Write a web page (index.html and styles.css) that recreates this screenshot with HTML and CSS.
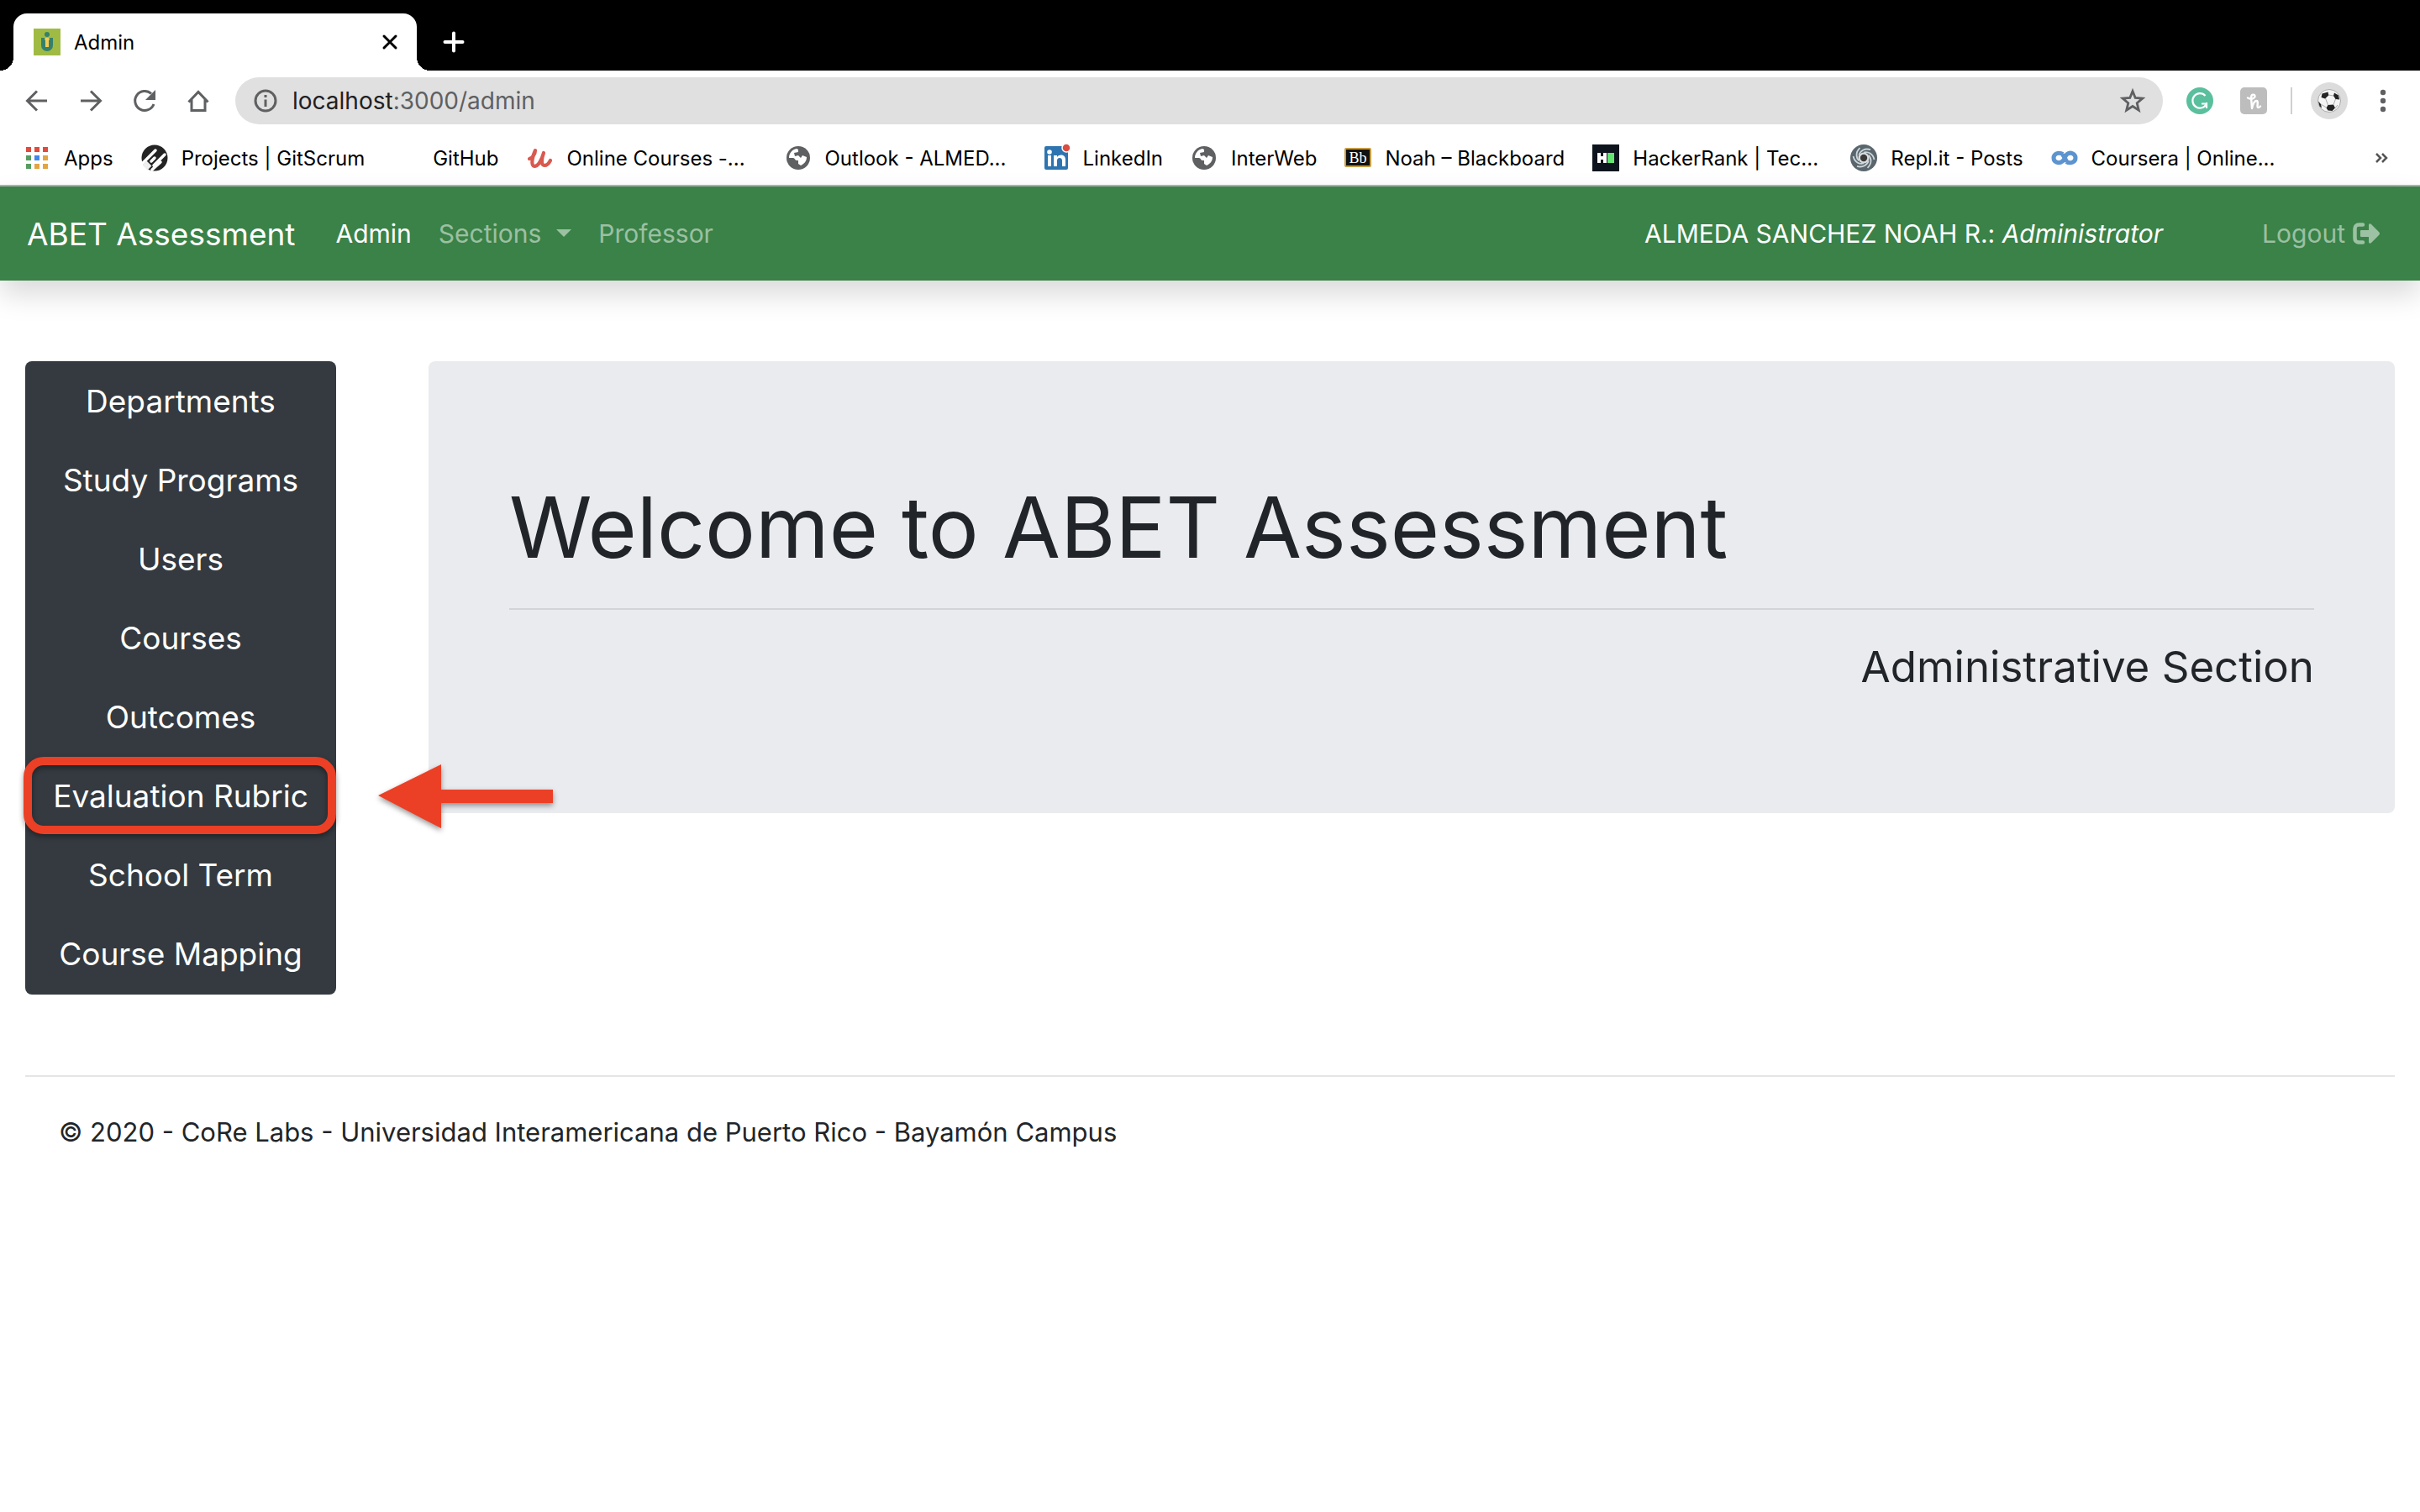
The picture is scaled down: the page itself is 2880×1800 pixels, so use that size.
FILE: index.html
```html
<!DOCTYPE html>
<html lang="en">
<head>
<meta charset="utf-8">
<title>Admin</title>
<link rel="stylesheet" href="styles.css">
</head>
<body>
<header class="browser">
  <div class="tabs">
    <div class="tab">
      <svg class="icon" viewBox="0 0 32 32" aria-hidden="true"><path fill="#a0bb43" d="M0 0h32v32H0z"/><circle cx="16" cy="7" r="3" fill="#35806c"/><path fill="#35806c" d="M9 11h14v9a7 7 0 0 1-14 0z"/><path fill="#f3cc55" d="M14 11h4v11h-4z"/><path fill="#a0bb43" d="M13 10h1v4h-1zM18 10h1v4h-1z"/></svg>
      <span class="tab-title">Admin</span>
      <button class="plain" aria-label="Close tab"><svg class="icon-sm" viewBox="0 0 24 24"><path d="M5 5l14 14M19 5L5 19" stroke="#000" stroke-width="3" stroke-linecap="round"/></svg></button>
    </div>
    <button class="plain new-tab" aria-label="New tab"><svg class="icon-sm" viewBox="0 0 24 24"><path d="M12 1.500v21M1.500 12h21" stroke="#fff" stroke-width="4" stroke-linecap="round"/></svg></button>
  </div>
  <div class="toolbar">
    <button class="plain" aria-label="Back"><svg class="icon" viewBox="0 0 32 32"><path d="M28 16H5M16 4.500L4.500 16 16 27.500" fill="none" stroke="#5f6062" stroke-width="3"/></svg></button>
    <button class="plain" aria-label="Forward"><svg class="icon" viewBox="0 0 32 32"><path d="M4 16h23M16 4.500L27.500 16 16 27.500" fill="none" stroke="#5f6062" stroke-width="3"/></svg></button>
    <button class="plain" aria-label="Reload"><svg class="icon" viewBox="0 0 32 32"><path d="M27 20A11.500 11.500 0 1 1 24 7.500" fill="none" stroke="#5f6062" stroke-width="3"/><path d="M29 3v12H17z" fill="#5f6062"/></svg></button>
    <button class="plain" aria-label="Home"><svg class="icon" viewBox="0 0 32 32"><path d="M4.500 17.500L16 5.500l11.500 12M8 14v13.500h16V14" fill="none" stroke="#5f6062" stroke-width="3"/></svg></button>
    <div class="omnibox">
      <svg class="icon" viewBox="0 0 32 32" aria-hidden="true"><circle cx="16" cy="16" r="12" fill="none" stroke="#5f6062" stroke-width="3"/><path d="M14.500 9h3v3h-3zM14.500 14.500h3V23h-3z" fill="#5f6062"/></svg>
      <span class="url"><span class="host">localhost</span>:3000/admin</span>
      <button class="plain" aria-label="Bookmark this page"><svg class="icon" viewBox="0 0 32 32"><path d="M16 4.500l3.200 8 8.600.600-6.600 5.600 2.100 8.400L16 22.500l-7.300 4.600 2.100-8.400-6.600-5.600 8.600-.600z" fill="none" stroke="#5f6062" stroke-width="2.800"/></svg></button>
    </div>
    <div class="extensions">
      <button class="plain" aria-label="Grammarly"><svg class="icon" viewBox="0 0 32 32"><circle cx="16" cy="16" r="16" fill="#5abf9d"/><path d="M22.500 10A8.700 8.700 0 1 0 24 19.500M18 19.500h6M24 18v7" fill="none" stroke="#fff" stroke-width="2.200"/></svg></button>
      <button class="plain" aria-label="Honey"><svg class="icon" viewBox="0 0 32 32"><rect width="32" height="32" rx="5" fill="#bdbdbd"/><path d="M9 12.500c4 2.500 9 .500 8.500-2.500-.500-2-4.500-2-4.500 2L14 25c1-4.500 3-9 5.500-9 3 0-.500 8 2 8 1 0 2-.500 2.500-1.500" fill="none" stroke="#fff" stroke-width="2.400" stroke-linecap="round" stroke-linejoin="round"/></svg></button>
    </div>
    <span class="divider"></span>
    <button class="plain avatar" aria-label="Profile"><svg class="icon" viewBox="0 0 32 32"><circle cx="16" cy="16" r="13.500" fill="#f5f5f5" stroke="#aaa"/><path d="M7.500 7.500l7-2 .800 4-4.300 4-4.500-1.500zM22 6.500l5 3 1 5-4.500-.500-2.500-4zM14.500 21l6.500-.500 2 4-3.500 3.500-5-.500-2-3zM3 16.500l3 3.500 1 4.500-2.500-2z" fill="#242424"/><path d="M15 9l6 1M11.500 13l3 8M21 20.500l2.500-6.500M6 20l6.500 4M23 25l3-4" fill="none" stroke="#aaa"/></svg></button>
    <button class="plain menu" aria-label="Menu"><svg class="icon" viewBox="0 0 32 32"><g fill="#5f6062"><circle cx="16" cy="6" r="3.200"/><circle cx="16" cy="16" r="3.200"/><circle cx="16" cy="26" r="3.200"/></g></svg></button>
  </div>
  <nav class="bookmarks" aria-label="Bookmarks">
    <a href="#"><svg class="icon" viewBox="0 0 32 32"><g fill="#df4b3d"><path d="M3 3h6v6H3zM13 3h6v6h-6zM23 3h6v6h-6z"/></g><path fill="#579c61" d="M3 13h6v6H3zM3 23h6v6H3z"/><path fill="#4285ee" d="M13 13h6v6h-6z"/><path fill="#e2a541" d="M23 13h6v6h-6zM13 23h6v6h-6zM23 23h6v6h-6z"/></svg><span>Apps</span></a>
    <a href="#"><svg class="icon" viewBox="0 0 32 32"><circle cx="16" cy="16" r="15.500" fill="#242424"/><path d="M2 22L17 7M12 20l4-4M15 25L28 12M13 30l10-9" stroke="#fff" stroke-width="3.500" stroke-linecap="round"/><path d="M4 22l6 6" stroke="#eee" stroke-width="7"/></svg><span>Projects | GitScrum</span></a>
    <a href="#"><svg class="icon" viewBox="0 0 32 32"></svg><span>GitHub</span></a>
    <a href="#"><svg class="icon" viewBox="0 0 32 32"><path d="M3 17c4-1 7-6 7-10-3 6-6 18-1 19 5 0 9-9 11-16-3 8-3 15 1 15 3 0 5-2 7-6" fill="none" stroke="#d9594f" stroke-width="4.200" stroke-linecap="round" stroke-linejoin="round"/></svg><span class="cut">Online Courses -...</span></a>
    <a href="#"><svg class="icon" viewBox="0 0 32 32"><circle cx="16" cy="16" r="14" fill="#5f6062"/><path d="M14 5c-5 1-9 5-9 11h5c2 0 2 3 4 3h2v4l3 2c4-2 7-5 7-10l-5-2-2 3-3-3-4 1-1-4 5-1V6z" fill="#fff"/></svg><span class="cut">Outlook - ALMED...</span></a>
    <a href="#"><svg class="icon" viewBox="0 0 32 32"><rect x="2" y="2" width="28" height="28" rx="2" fill="#2e74b0"/><circle cx="8" cy="9" r="2.800" fill="#fff"/><path d="M6 13h4v13H6zM13 13h4v2c3-4 10-3 10 3v8h-4v-7c0-4-6-4-6 0v7h-4z" fill="#fff"/><circle cx="28" cy="4" r="5" fill="#dc4c40" stroke="#fff" stroke-width="1.500"/></svg><span>LinkedIn</span></a>
    <a href="#"><svg class="icon" viewBox="0 0 32 32"><circle cx="16" cy="16" r="14" fill="#5f6062"/><path d="M14 5c-5 1-9 5-9 11h5c2 0 2 3 4 3h2v4l3 2c4-2 7-5 7-10l-5-2-2 3-3-3-4 1-1-4 5-1V6z" fill="#fff"/></svg><span>InterWeb</span></a>
    <a href="#"><svg class="icon" viewBox="0 0 32 32"><rect x="1" y="5" width="30" height="21" rx="1" fill="#111" stroke="#c69c42" stroke-width="2"/><text x="16" y="22" text-anchor="middle" class="bb">Bb</text></svg><span>Noah – Blackboard</span></a>
    <a href="#"><svg class="icon" viewBox="0 0 32 32"><path fill="#0e141e" d="M0 0h32v32H0z"/><path d="M6 10h4v4h3v-4h4v12h-4v-4h-3v4H6z" fill="#fff"/><path fill="#64e572" d="M18 10h8v12h-8z"/></svg><span class="cut">HackerRank | Tec...</span></a>
    <a href="#"><svg class="icon" viewBox="0 0 32 32"><circle cx="16" cy="16" r="16" fill="#59666e"/><circle cx="16" cy="16" r="6.500" fill="#d8dee0"/><g fill="none" stroke="#cdd5d8" stroke-width="1.800"><path id="arm" d="M16 9.500C21 8 27 11 28.500 18"/><use href="#arm" transform="rotate(60 16 16)"/><use href="#arm" transform="rotate(120 16 16)"/><use href="#arm" transform="rotate(180 16 16)"/><use href="#arm" transform="rotate(240 16 16)"/><use href="#arm" transform="rotate(300 16 16)"/></g><circle cx="16" cy="16" r="4.200" fill="#3d3a3a"/></svg><span>Repl.it - Posts</span></a>
    <a href="#"><svg class="icon" viewBox="0 0 32 32"><path d="M14 11.500C9 8.500 3 11 3 16s6 7.500 10.500 4c3-2.500 2.500-6 5.500-8.500 4-3 10-.500 10 4.500s-6 7.500-11 4.500M13.500 12c2 2 3 5 5 8" fill="none" stroke="#5d94cf" stroke-width="5"/></svg><span>Coursera | Online...</span></a>
    <button class="plain more" aria-label="More bookmarks"><svg class="icon-sm" viewBox="0 0 24 24"><path d="M6 7l5 5-5 5M13 7l5 5-5 5" fill="none" stroke="#555" stroke-width="2.500"/></svg></button>
  </nav>
</header>
<nav class="navbar" aria-label="Main">
  <a class="brand" href="#">ABET Assessment</a>
  <a class="active" href="#">Admin</a>
  <a href="#">Sections<span class="caret"></span></a>
  <a href="#">Professor</a>
  <span class="user">ALMEDA SANCHEZ NOAH R.: <em>Administrator</em></span>
  <a class="logout" href="#">Logout <svg class="icon" viewBox="0 0 32 32" aria-hidden="true"><path d="M12 5.500H7A4.500 4.500 0 0 0 2.500 10v12A4.500 4.500 0 0 0 7 26.500h5" fill="none" stroke="currentColor" stroke-width="4.500" stroke-linecap="round"/><path d="M10 12h9V6c0-2 2-2 3-1l9 9q2 2 0 4l-9 9c-1 1-3 1-3-1v-6h-9q-1 0-1-1v-6q0-1 1-1z" fill="currentColor"/></svg></a>
</nav>
<main class="content">
  <nav class="sidebar" aria-label="Administration">
    <a href="#">Departments</a>
    <a href="#">Study Programs</a>
    <a href="#">Users</a>
    <a href="#">Courses</a>
    <a href="#">Outcomes</a>
    <a class="marked" href="#">Evaluation Rubric<svg class="arrow" viewBox="0 0 208 76" aria-hidden="true"><path d="M0 37L75 0v30h133v16H75v30z" fill="#eb4026"/></svg></a>
    <a href="#">School Term</a>
    <a href="#">Course Mapping</a>
  </nav>
  <section class="hero">
    <h1>Welcome to ABET Assessment</h1>
    <hr>
    <p>Administrative Section</p>
  </section>
</main>
<footer class="footer">© 2020 - CoRe Labs - Universidad Interamericana de Puerto Rico - Bayamón Campus</footer>
</body>
</html>
```
FILE: styles.css
```css
* { box-sizing: border-box; }
body {
  margin: 0;
  background: #fff;
  color: #212529;
  font-family: Inter, "Liberation Sans", sans-serif;
  font-size: 30px;
}
a { color: inherit; text-decoration: none; }
svg { display: block; overflow: visible; flex: none; }
.plain { display: block; padding: 0; border: 0; background: none; flex: none; }
.icon { width: 32px; height: 32px; }
.icon-sm { width: 24px; height: 24px; }

.browser { border-bottom: 2px solid #b2b2b2; color: #000; font-size: 24px; }
.tabs { display: flex; align-items: flex-end; height: 84px; padding-left: 16px; background: #000; }
.tab {
  position: relative;
  display: flex;
  align-items: center;
  gap: 16px;
  width: 480px;
  height: 68px;
  padding: 0 20px 0 24px;
  border-radius: 16px 16px 0 0;
  background: #fff;
}
.tab::before, .tab::after {
  content: "";
  position: absolute;
  bottom: 0;
  width: 16px;
  height: 16px;
}
.tab::before { right: 100%; background: radial-gradient(circle at 0 0, transparent 16px, #fff 16px); }
.tab::after { left: 100%; background: radial-gradient(circle at 100% 0, transparent 16px, #fff 16px); }
.tab-title { flex: 1; }
.new-tab { margin: 0 0 22px 32px; }

.toolbar { display: flex; align-items: center; height: 72px; padding: 0 28px; gap: 32px; }
.omnibox {
  display: flex;
  align-items: center;
  flex: 1;
  height: 56px;
  margin: 0 -4px;
  padding: 0 20px;
  gap: 16px;
  border-radius: 28px;
  background: #e0e0e0;
}
.url { flex: 1; color: #5f6062; font-size: 28px; }
.host { color: #202124; }
.extensions { display: flex; gap: 32px; }
.divider { width: 2px; height: 32px; margin-left: -4px; background: #d0d0d0; }
.avatar { margin: 0 -10px; padding: 6px; border-radius: 50%; background: #dcdcdc; }
.menu { margin-left: 4px; }

.bookmarks { display: flex; align-items: center; gap: 33px; height: 64px; padding: 0 34px 0 28px; }
.bookmarks a { display: flex; align-items: center; gap: 16px; white-space: nowrap; }
.cut { min-width: 226px; }
.more { margin-left: auto; }
.bb { fill: #fff; font-family: "Liberation Serif", serif; font-size: 18px; }

.navbar {
  position: relative;
  display: flex;
  align-items: center;
  gap: 32px;
  height: 112px;
  padding: 0 48px 0 32px;
  background: #3a8247;
  box-shadow: 0 16px 32px rgba(0, 0, 0, .15);
  color: rgba(255, 255, 255, .5);
}
.brand { margin-right: 16px; color: #fff; font-size: 37px; }
.active, .user { color: #fff; }
.caret {
  display: inline-block;
  margin-left: 18px;
  border: 9px solid transparent;
  border-top-color: currentColor;
  border-bottom: 0;
  vertical-align: 7px;
}
.user { margin-left: auto; }
.logout { display: flex; align-items: center; gap: 9px; margin-left: 86px; }

.content {
  display: grid;
  grid-template-columns: 370px 1fr;
  align-items: start;
  gap: 110px;
  padding: 96px 30px;
}
.sidebar { padding: 1px 0; border-radius: 8px; background: #343a40; color: #fff; font-size: 37px; }
.sidebar a {
  position: relative;
  display: block;
  padding: 17px 0;
  line-height: 60px;
  text-align: center;
}
.marked::before {
  content: "";
  position: absolute;
  inset: 0 0 2px -2px;
  border: 10px solid #eb4026;
  border-radius: 24px;
  filter: drop-shadow(0 3px 3px rgba(0, 0, 0, .4));
}
.arrow {
  position: absolute;
  top: 9px;
  left: 420px;
  width: 208px;
  height: 76px;
  filter: drop-shadow(0 3px 3px rgba(0, 0, 0, .4));
}
.hero { min-height: 538px; padding: 132px 96px 0; border-radius: 8px; background: #eaebef; }
.hero h1 { margin: 0; font-size: 100px; font-weight: 400; line-height: 132px; }
.hero hr { height: 2px; margin: 30px 0 32px; border: 0; background: #d2d4d8; }
.hero p { margin: 0; font-size: 51px; line-height: 72px; text-align: right; }
.footer { margin: 0 30px; padding: 46px 40px; border-top: 2px solid #e5e5e5; font-size: 31px; line-height: 40px; }
```
